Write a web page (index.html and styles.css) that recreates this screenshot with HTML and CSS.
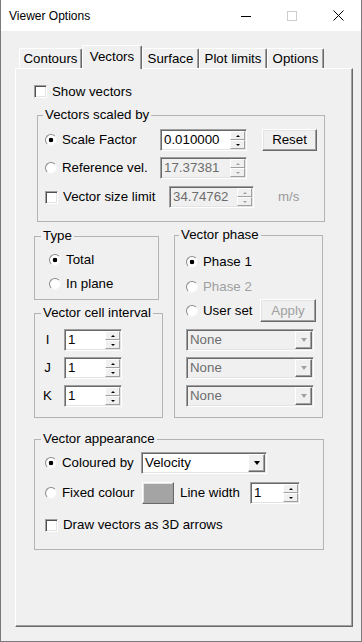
FILE: index.html
```html
<!DOCTYPE html>
<html lang="en">
<head>
  <meta charset="UTF-8" />
  <title>Viewer Options</title>
  <link rel="stylesheet" href="styles.css">
</head>
<body>
  <div class="window">
    <div class="titlebar">
      <span class="title">Viewer Options</span>
      <div class="caption-btns">
        <span class="cap-btn"><svg width="10" height="10" viewBox="0 0 10 10"><path d="M0 5.5H10" stroke="#000" stroke-width="1"/></svg></span>
        <span class="cap-btn"><svg width="10" height="10" viewBox="0 0 10 10"><rect x="0.5" y="0.5" width="9" height="9" fill="none" stroke="#cccccc" stroke-width="1"/></svg></span>
        <span class="cap-btn"><svg width="11" height="11" viewBox="0 0 11 11"><path d="M0.5 0.5L10.5 10.5M10.5 0.5L0.5 10.5" stroke="#000" stroke-width="1"/></svg></span>
      </div>
    </div>

    <div class="client">
      <div class="tabs">
        <div class="tab t-contours">Contours</div>
        <div class="tab active t-vectors">Vectors</div>
        <div class="tab t-surface">Surface</div>
        <div class="tab t-limits">Plot limits</div>
        <div class="tab t-options">Options</div>
      </div>

      <div class="panel">
        <div class="opt show-row"><span class="checkbox"></span>Show vectors</div>

        <fieldset class="grp grp-scale">
          <legend>Vectors scaled by</legend>
          <div class="row">
            <span class="opt lbl-scale"><span class="radio on"></span>Scale Factor</span>
            <div class="spin w87">
              <span class="spin-text">0.010000</span>
              <span class="spin-btns"><i class="up"></i><i class="dn"></i></span>
            </div>
            <button class="btn reset">Reset</button>
          </div>
          <div class="row row-ref">
            <span class="opt lbl-scale"><span class="radio"></span>Reference vel.</span>
            <div class="spin w87 disabled">
              <span class="spin-text">17.37381</span>
              <span class="spin-btns"><i class="up"></i><i class="dn"></i></span>
            </div>
          </div>
          <div class="row row-limit">
            <span class="opt lbl-limit"><span class="checkbox"></span>Vector size limit</span>
            <div class="spin w85 disabled">
              <span class="spin-text">34.74762</span>
              <span class="spin-btns"><i class="up"></i><i class="dn"></i></span>
            </div>
            <span class="units">m/s</span>
          </div>
        </fieldset>

        <div class="cols">
          <div class="col-left">
            <fieldset class="grp grp-type">
              <legend>Type</legend>
              <div class="opt type-row"><span class="radio on"></span>Total</div>
              <div class="opt type-row second"><span class="radio"></span>In plane</div>
            </fieldset>

            <fieldset class="grp grp-cells">
              <legend>Vector cell interval</legend>
              <div class="row cell-row">
                <span class="axis">I</span>
                <div class="spin w58">
                  <span class="spin-text">1</span>
                  <span class="spin-btns"><i class="up"></i><i class="dn"></i></span>
                </div>
              </div>
              <div class="row cell-row">
                <span class="axis">J</span>
                <div class="spin w58">
                  <span class="spin-text">1</span>
                  <span class="spin-btns"><i class="up"></i><i class="dn"></i></span>
                </div>
              </div>
              <div class="row cell-row">
                <span class="axis">K</span>
                <div class="spin w58">
                  <span class="spin-text">1</span>
                  <span class="spin-btns"><i class="up"></i><i class="dn"></i></span>
                </div>
              </div>
            </fieldset>
          </div>

          <fieldset class="grp grp-phase">
            <legend>Vector phase</legend>
            <div class="opt phase-row"><span class="radio on"></span>Phase 1</div>
            <div class="opt phase-row p2 disabled-text"><span class="radio"></span>Phase 2</div>
            <div class="row user-row">
              <span class="opt lbl-user"><span class="radio"></span>User set</span>
              <button class="btn apply" disabled>Apply</button>
            </div>
            <div class="combo disabled first"><span class="combo-text">None</span><span class="combo-btn"><i></i></span></div>
            <div class="combo disabled"><span class="combo-text">None</span><span class="combo-btn"><i></i></span></div>
            <div class="combo disabled"><span class="combo-text">None</span><span class="combo-btn"><i></i></span></div>
          </fieldset>
        </div>

        <fieldset class="grp grp-appear">
          <legend>Vector appearance</legend>
          <div class="row">
            <span class="opt lbl-coloured"><span class="radio on"></span>Coloured by</span>
            <div class="combo velocity"><span class="combo-text">Velocity</span><span class="combo-btn"><i></i></span></div>
          </div>
          <div class="row row-fixed">
            <span class="opt lbl-fixed"><span class="radio"></span>Fixed colour</span>
            <button class="btn swatch"></button>
            <span class="line-lbl">Line width</span>
            <div class="spin w50">
              <span class="spin-text">1</span>
              <span class="spin-btns"><i class="up"></i><i class="dn"></i></span>
            </div>
          </div>
          <div class="opt arrows-row"><span class="checkbox"></span>Draw vectors as 3D arrows</div>
        </fieldset>
      </div>
    </div>
  </div>
</body>
</html>
```

FILE: styles.css
```css
body {
    margin: 0;
    font-family: "Liberation Sans", Arial, sans-serif;
    font-size: 13.3px;
    line-height: 16px;
    color: #000;
    background-color: #f0f0f0;
}

.window {
    width: 362px;
    height: 642px;
    box-sizing: border-box;
    border: 1px solid #7a7a7a;
    border-top: none;
    background-color: #f0f0f0;
}

/* title bar */
.titlebar {
    display: flex;
    align-items: center;
    height: 31px;
    background-color: #fff;
}

.title {
    font-size: 12px;
    padding-left: 8px;
    padding-top: 1px;
}

.caption-btns {
    display: flex;
    margin-left: auto;
    height: 31px;
}

.cap-btn {
    width: 46px;
    display: flex;
    align-items: center;
    justify-content: center;
}

/* tabs */
.client {
    padding: 14px 8px 0 14px;
}

.tabs {
    display: flex;
    align-items: flex-end;
    height: 23px;
    padding-left: 4px;
}

.tab {
    box-sizing: border-box;
    height: 20px;
    display: flex;
    align-items: center;
    justify-content: center;
    border: 1px solid #fff;
    border-bottom: none;
    border-right-color: #696969;
    box-shadow: inset -1px 0 #a0a0a0;
    border-radius: 2px 2px 0 0;
    background-color: #f0f0f0;
}

.tab.active {
    height: 24px;
    margin-bottom: -1px;
    padding-bottom: 1px;
    position: relative;
    z-index: 1;
}

.t-contours { width: 63px; }
.t-vectors { width: 60px; }
.t-surface { width: 57px; }
.t-limits { width: 68px; }
.t-options { width: 57px; }

.panel {
    box-sizing: border-box;
    width: 338px;
    height: 559px;
    border: 1px solid #fff;
    border-right-color: #696969;
    border-bottom-color: #696969;
    box-shadow: inset -1px -1px #a0a0a0;
    background-color: #f0f0f0;
}

/* common controls */
.opt {
    display: flex;
    align-items: center;
    white-space: nowrap;
}

.row {
    display: flex;
    align-items: center;
}

.checkbox {
    width: 13px;
    height: 13px;
    box-sizing: border-box;
    flex: none;
    margin-right: 5px;
    border: 1px solid;
    border-color: #a0a0a0 #fff #fff #a0a0a0;
    box-shadow: inset 1px 1px #505050, inset -1px -1px #e3e3e3;
    background-color: #fff;
}

.radio {
    width: 12px;
    height: 12px;
    box-sizing: border-box;
    flex: none;
    margin-right: 5px;
    border-radius: 50%;
    border: 1px solid;
    border-color: #8a8a8a #f4f4f4 #f4f4f4 #8a8a8a;
    background: #fff;
}

.radio.on {
    background: radial-gradient(circle, #000 0 2px, #fff 2.6px);
}

.btn {
    box-sizing: border-box;
    height: 22px;
    padding: 0;
    font: inherit;
    color: #000;
    border: 1px solid;
    border-color: #fff #696969 #696969 #fff;
    box-shadow: inset -1px -1px #a0a0a0, inset 1px 1px #e3e3e3;
    background-color: #f0f0f0;
}

.btn:disabled {
    color: #a0a0a0;
}

.spin,
.combo {
    display: flex;
    box-sizing: border-box;
    height: 22px;
    padding: 1px;
    border: 1px solid;
    border-color: #a0a0a0 #fff #fff #a0a0a0;
    box-shadow: inset 1px 1px #696969, inset -1px -1px #e3e3e3;
    background-color: #fff;
}

.spin-text,
.combo-text {
    flex: 1;
    padding-left: 2px;
    line-height: 18px;
}

.spin-btns {
    display: flex;
    flex-direction: column;
    width: 15px;
}

.spin-btns i {
    flex: 1;
    display: flex;
    align-items: center;
    justify-content: center;
    box-sizing: border-box;
    border: 1px solid;
    border-color: #fff #a0a0a0 #a0a0a0 #fff;
    background-color: #f0f0f0;
}

.spin-btns i::before {
    content: "";
    width: 0;
    height: 0;
    border-left: 2px solid transparent;
    border-right: 2px solid transparent;
}

.spin-btns .up::before {
    border-bottom: 2px solid #000;
}

.spin-btns .dn::before {
    border-top: 2px solid #000;
}

.spin.disabled,
.combo.disabled {
    background-color: #f0f0f0;
    color: #6d6d6d;
}

.spin.disabled .spin-btns .up::before {
    border-bottom-color: #a0a0a0;
}

.spin.disabled .spin-btns .dn::before {
    border-top-color: #a0a0a0;
}

.combo-btn {
    width: 17px;
    display: flex;
    align-items: center;
    justify-content: center;
    box-sizing: border-box;
    border: 1px solid;
    border-color: #fff #696969 #696969 #fff;
    box-shadow: inset -1px -1px #a0a0a0;
    background-color: #f0f0f0;
}

.combo-btn i {
    width: 0;
    height: 0;
    border-left: 3px solid transparent;
    border-right: 3px solid transparent;
    border-top: 4px solid #000;
}

.combo.disabled .combo-btn i {
    border-top-color: #a0a0a0;
}

.disabled-text {
    color: #a0a0a0;
}

/* group boxes */
.grp {
    box-sizing: border-box;
    margin: 0;
    padding: 0;
    min-width: 0;
    border: 1px solid #b4b4b4;
}

.grp legend {
    padding: 0 2px;
    margin-left: 6px;
    line-height: 16px;
}

.show-row {
    height: 13px;
    margin: 16px 0 0 18px;
}

.grp-scale {
    width: 288px;
    margin: 9px 0 0 21px;
    padding: 6px 0 13px 7px;
}

.grp-scale legend {
    margin-left: -2px;
}

.grp-scale .row {
    height: 22px;
}

.row-ref { margin-top: 6px; }
.row-limit { margin-top: 7px; }

.lbl-scale { width: 115px; }
.lbl-limit { width: 124px; }

.w87 { width: 87px; }
.w85 { width: 85px; }
.w58 { width: 58px; }
.w50 { width: 50px; }

.reset {
    width: 55px;
    margin-left: 15px;
}

.units {
    margin-left: 24px;
    color: #999;
}

.cols {
    display: flex;
    align-items: flex-start;
    margin: 5px 0 0 18px;
}

.col-left {
    width: 129px;
}

.grp-type {
    width: 125px;
    margin-top: 1px;
    padding: 8px 0 7px 14px;
}

.grp-type legend {
    margin-left: -8px;
}

.type-row {
    height: 16px;
}

.type-row.second {
    margin-top: 8px;
}

.grp-cells {
    width: 129px;
    margin-top: 5px;
    padding: 8px 0 10px 8px;
}

.grp-cells legend {
    margin-left: -2px;
}

.cell-row + .cell-row {
    margin-top: 6px;
}

.axis {
    width: 9px;
    margin-right: 12px;
    text-align: center;
}

.grp-phase {
    width: 149px;
    margin-left: 11px;
    padding: 11px 0 10px 11px;
}

.grp-phase legend {
    margin-left: -7px;
}

.phase-row {
    height: 16px;
}

.phase-row.p2 {
    margin-top: 9px;
}

.user-row {
    margin-top: 4px;
}

.lbl-user {
    width: 74px;
}

.apply {
    width: 56px;
    height: 23px;
}

.grp-phase .combo {
    width: 128px;
    margin-top: 6px;
}

.grp-phase .combo.first {
    margin-top: 7px;
}

.grp-appear {
    width: 290px;
    margin: 13px 0 0 18px;
    padding: 5px 0 16px 10px;
}

.grp-appear legend {
    margin-left: -4px;
}

.grp-appear .row {
    height: 22px;
}

.lbl-coloured { width: 96px; }
.lbl-fixed { width: 97px; }

.velocity {
    width: 126px;
}

.row-fixed {
    margin-top: 8px;
}

.swatch {
    width: 32px;
    background-color: #a4a4a4;
}

.line-lbl {
    width: 70px;
    margin-left: 6px;
}

.arrows-row {
    height: 16px;
    margin-top: 13px;
}
```
